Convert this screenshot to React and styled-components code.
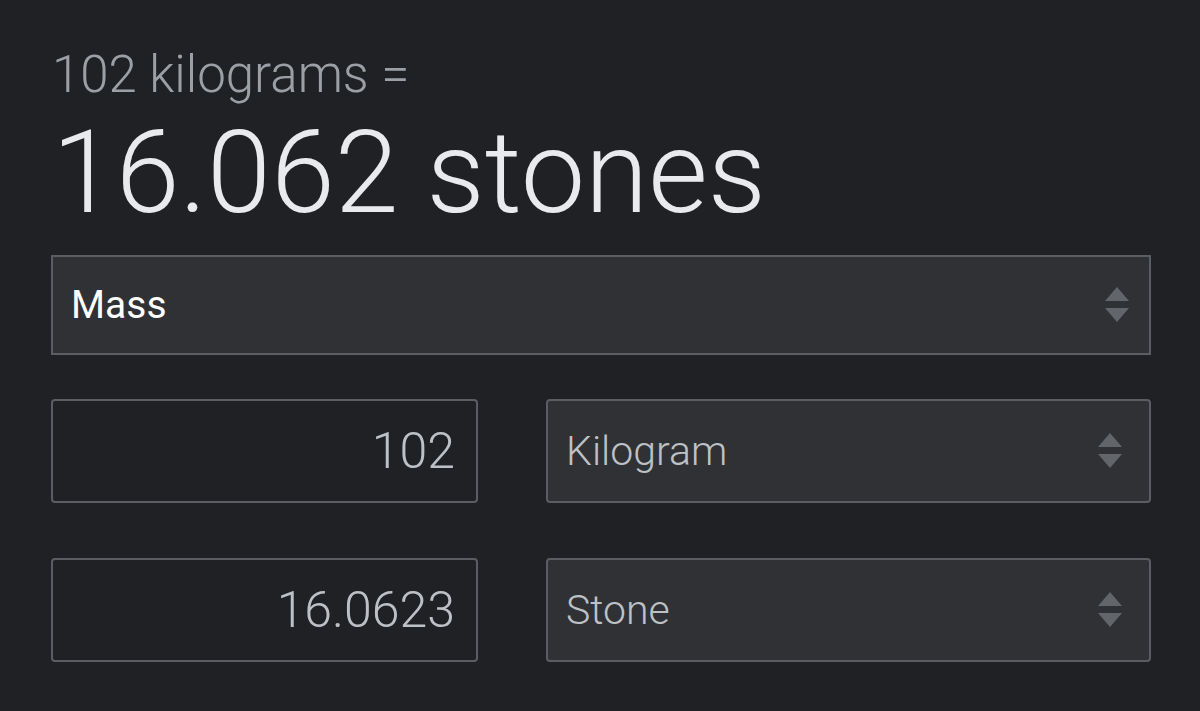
import React from "react";
import styled, { createGlobalStyle } from "styled-components";

const Global = createGlobalStyle`
  html, body { margin: 0; padding: 0; background: #202124; }
  body { font-family: Roboto, "Liberation Sans", sans-serif; }
`;

const Page = styled.div`
  width: 1200px;
  height: 711px;
  box-sizing: border-box;
  background: #202124;
  padding: 48px 49px 0 51px;
  display: flex;
  flex-direction: column;
  overflow: hidden;
`;

const Query = styled.div`
  font-size: 51px;
  font-weight: 300;
  color: #9aa0a6;
  line-height: 54px;
  padding-left: 1px;
`;

const Result = styled.div`
  font-size: 115px;
  font-weight: 300;
  color: #e8eaed;
  line-height: 120px;
  margin-top: 11px;
  padding-left: 1px;
`;

const Select = styled.div`
  box-sizing: border-box;
  height: ${(p) => p.$h}px;
  background: #303134;
  border: 2px solid #5a5d61;
  border-radius: ${(p) => (p.$round ? 4 : 0)}px;
  display: flex;
  align-items: center;
  justify-content: space-between;
  padding: 0 ${(p) => p.$pr}px 0 ${(p) => p.$pl}px;
  color: ${(p) => p.$color};
  font-size: ${(p) => p.$fs}px;
  font-weight: ${(p) => p.$fw};
`;

const CategoryWrap = styled.div`
  margin-top: 22px;
`;

const Grid = styled.div`
  display: grid;
  grid-template-columns: 427px 1fr;
  column-gap: 68px;
  row-gap: 55px;
  margin-top: 44px;
`;

const Input = styled.div`
  box-sizing: border-box;
  height: 104px;
  border: 2px solid #5a5d61;
  border-radius: 4px;
  background: #202124;
  display: flex;
  align-items: center;
  justify-content: flex-end;
  padding-right: 21px;
  font-size: 50px;
  font-weight: 300;
  color: #bdc1c6;
`;

const Arrows = () => (
  <svg width="24" height="36" viewBox="0 0 24 36">
    <polygon points="12,0 24,14 0,14" fill="#62666a" />
    <polygon points="0,21 24,21 12,35" fill="#62666a" />
  </svg>
);

const units = [
  { value: "102", unit: "Kilogram" },
  { value: "16.0623", unit: "Stone" },
];

export default function App() {
  return (
    <Page>
      <Global />
      <Query>102 kilograms =</Query>
      <Result>16.062 stones</Result>
      <CategoryWrap>
        <Select $h={100} $pl={18} $pr={20} $color="#ffffff" $fs={39} $fw={400}>
          <span>Mass</span>
          <Arrows />
        </Select>
      </CategoryWrap>
      <Grid>
        {units.map((u) => (
          <React.Fragment key={u.unit}>
            <Input>{u.value}</Input>
            <Select $h={104} $round $pl={18} $pr={27} $color="#bdc1c6" $fs={41} $fw={300}>
              <span>{u.unit}</span>
              <Arrows />
            </Select>
          </React.Fragment>
        ))}
      </Grid>
    </Page>
  );
}
